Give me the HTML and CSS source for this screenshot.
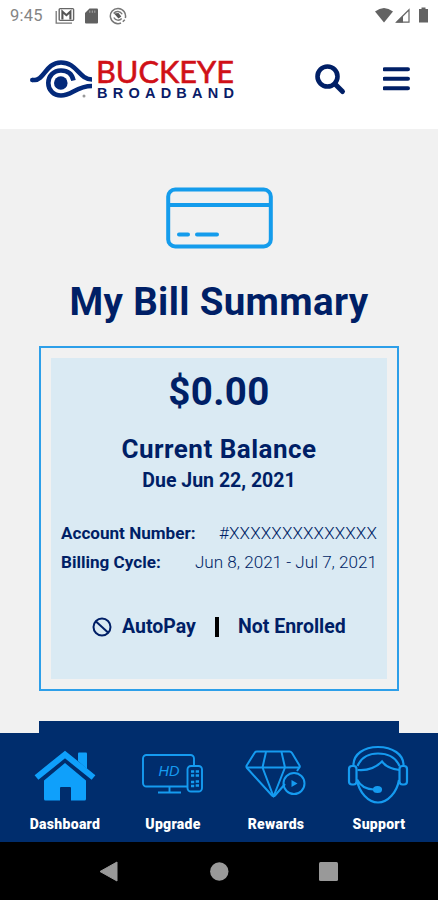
FILE: index.html
```html
<!DOCTYPE html>
<html lang="en">
<head>

    <meta charset="UTF-8">
    <meta name="viewport" content="width=device-width, initial-scale=1.0">

    <title>Buckeye Broadband - My Bill</title>

    <link rel="stylesheet" href="styles.css">

</head>
<body>

    <div class="status">

        <span class="clock">9:45</span>

        <svg class="mail" width="20" height="18" viewBox="0 0 20 18">
            <path d="M1.2 4v12.2H17" fill="none" stroke="#777" stroke-width="1.3"/>
            <rect x="4.2" y="1.6" width="14.4" height="11.8" rx="1" fill="#fff" stroke="#666" stroke-width="1.4"/>
            <path d="M7.4 12.5V4.6l4 3.6 4-3.6v7.9" fill="none" stroke="#555" stroke-width="2.1"/>
        </svg>

        <svg class="sd" width="13" height="16" viewBox="0 0 13 16">
            <path d="M4.5 .5H12a1 1 0 0 1 1 1v13a1 1 0 0 1-1 1H1a1 1 0 0 1-1-1V5z" fill="#606060"/>
            <path d="M4.8 2.5v2.3M7.3 2.5v2.3M9.8 2.5v2.3" stroke="#aaa"/>
        </svg>

        <svg class="sync" width="18" height="18" viewBox="0 0 18 18" fill="none" stroke="#777">
            <path d="M16.3 11A7.6 7.6 0 1 0 12 16" stroke-width="1.5"/>
            <path d="M13.8 14.8l2-2" stroke-width="1.5"/>
            <path d="M4.6 6.5C7 3.4 11.5 4 13.2 7.3M4.8 10.5c1.7 3.2 5.7 3.6 7.9 1" stroke-width="1.4"/>
            <path d="M5 6.5l4.5-.5 2.8 3.5-2.8 2z" fill="#555" stroke="none"/>
        </svg>

        <div class="signal">
            <svg width="54" height="17" viewBox="0 0 54 17">
                <path d="M0 4.5Q9 -2.5 18 4.5L9 15.5z" fill="#636363"/>
                <path d="M21.5 15.2L34 2.8v12.4z" fill="none" stroke="#666" stroke-width="1.2"/>
                <path d="M21 15.5l7-7v7z" fill="#636363"/>
                <path d="M46.5.5h4V2H53v13.5h-9V2h2.5z" fill="#636363"/>
            </svg>
        </div>

    </div>

    <header>

        <svg class="logo" width="206" height="50" viewBox="0 -6 206 50" role="img" aria-label="Buckeye Broadband">
            <g fill="none" stroke="#03297a" stroke-width="4.6">
                <path d="M2.2 25H5C14 25 16 7.5 31 7.5C47 7.5 49 24.5 62 24.5"/>
                <path d="M43.5 25.5C42 18.5 37 15.5 31 15.5C23.500 15.500 18.300 21 18.300 28C18.300 35 23.500 40.500 31 40.500C42 40.500 46 31 62 31"/>
            </g>
            <circle cx="2.3" cy="25" r="2.3" fill="#03297a"/>
            <circle cx="30.8" cy="28" r="6.8" fill="#03297a"/>
            <circle cx="54" cy="41" r="1.5" fill="#999"/>
            <text class="buckeye" x="66" y="28" textLength="138" lengthAdjust="spacingAndGlyphs">BUCKEYE</text>
            <text class="broadband" x="67" y="43" textLength="137">BROADBAND</text>
        </svg>

        <svg class="search" width="32" height="32" viewBox="0 0 32 32" fill="none" stroke="#001f66">
            <circle cx="12.5" cy="12.5" r="10" stroke-width="4.6"/>
            <path d="M20 20l7.5 7.5" stroke-width="5" stroke-linecap="round"/>
        </svg>

        <svg class="burger" width="28" height="24" viewBox="0 0 28 24">
            <path d="M1.5 2.3H25M1.5 11.8H25M1.5 21.3H25" stroke="#001f66" stroke-width="4" stroke-linecap="round"/>
        </svg>

    </header>

    <main>

        <svg class="card" width="108" height="62" viewBox="0 0 108 62" fill="none" stroke="#149cec">
            <rect x="3.2" y="2.5" width="102.6" height="57" rx="7" stroke-width="4"/>
            <path d="M3 18h103" stroke-width="4"/>
            <path d="M14 47.6h9M32 47.6h20" stroke-width="4" stroke-linecap="round"/>
        </svg>

        <h1>My Bill Summary</h1>

        <section class="bill">
            <div class="inner">

                <p class="amount">$0.00</p>
                <h2>Current Balance</h2>
                <p class="due">Due Jun 22, 2021</p>

                <div class="row account"><b>Account Number:</b> <span>#XXXXXXXXXXXXXX</span></div>
                <div class="row cycle"><b>Billing Cycle:</b> <span>Jun 8, 2021 - Jul 7, 2021</span></div>

                <div class="autopay">
                    <svg width="20" height="20" viewBox="0 0 20 20" fill="none" stroke="#001f66" stroke-width="2">
                        <circle cx="10" cy="10" r="8.5"/>
                        <path d="M4 4.5L16 15.5"/>
                    </svg>
                    <span class="name">AutoPay</span>
                    <i></i>
                    <span class="state">Not Enrolled</span>
                </div>

            </div>
        </section>

        <div class="pay"></div>

    </main>

    <nav class="tabs">

        <a>
            <svg width="64" height="64" viewBox="0 0 64 64" fill="#0fa0fb">
                <path d="M45 10.5a1 1 0 0 1 1-1h7a1 1 0 0 1 1 1V26l-9-8z"/>
                <path d="M3.5 34.5L32 11.500l28.500 23" fill="none" stroke="#0fa0fb" stroke-width="6"/>
                <path d="M32 20L53 37.500v18.500a1.500 1.500 0 0 1-1.500 1.500H38V45a1 1 0 0 0-1-1h-9a1 1 0 0 0-1 1V57.500H12.500a1.500 1.500 0 0 1-1.500-1.500V37.500z"/>
            </svg>
            <span class="dashboard">Dashboard</span>
        </a>

        <a>
            <svg width="64" height="64" viewBox="0 0 64 64" fill="none" stroke="#159bf0" stroke-width="1.9">
                <path d="M46 43.500H5.500A3.500 3.500 0 0 1 2 40V15.500a3.500 3.500 0 0 1 3.500-3.500h44A3.500 3.500 0 0 1 53 15.500V22M28.500 43.500V49M17 49.500h23"/>
                <rect x="46.5" y="23" width="14.5" height="25.5" rx="3.5"/>
                <path d="M50 28.500h3.200M54.700 28.500H58M50 32.500h3.200M54.700 32.500H58M50 39h3.200M54.700 38.500H58M50 43h3.200M54.700 42.500H58" stroke-width="2.400"/>
                <text class="hd" x="17.5" y="32.5" textLength="21" lengthAdjust="spacingAndGlyphs">HD</text>
            </svg>
            <span class="upgrade">Upgrade</span>
        </a>

        <a>
            <svg width="64" height="64" viewBox="0 0 64 64" fill="none" stroke="#159bf0" stroke-width="2" stroke-linejoin="round">
                <path d="M41 41L31 52.500Q29.700 54 28 52.500L3 25Q2 24 2.700 22.500L10.500 10Q11.300 8.500 13 8.500h32.500Q47 8.500 48 10L55.500 22.500Q56.300 24 55 25L53 28"/>
                <path d="M2.500 24.500h53M22 9l-3.500 15.500L29.500 53.500 41 24.500 37.500 9"/>
                <circle cx="50" cy="40.500" r="10.500"/>
                <path d="M47.500 37v7l6-3.500z" fill="#159bf0" stroke="none"/>
            </svg>
            <span class="rewards">Rewards</span>
        </a>

        <a>
            <svg width="64" height="64" viewBox="0 0 64 64" fill="none" stroke="#159bf0" stroke-width="2.2">
                <path d="M6.5 23C6 11 17 4 31 4S57 11 56.500 23M10.500 23C14 15 21 10.500 31 10.500S49 15 52.500 23"/>
                <rect x="2" y="23" width="7.5" height="18.5" rx="3"/>
                <rect x="52.500" y="23" width="7.5" height="18.5" rx="3"/>
                <path d="M10.500 27c11 1 18-2 24.500-8.500 3 4 9 7.500 17.500 8.500M10 37c2 12 11 22.500 21 22.500s19-10.500 21-22.500"/>
                <path d="M10 36.500c3 6 9 9.500 16.500 10"/>
                <ellipse cx="30.500" cy="46.500" rx="3.5" ry="2.5" fill="#159bf0"/>
            </svg>
            <span class="support">Support</span>
        </a>

    </nav>

    <div class="android">
        <svg width="438" height="58" viewBox="0 0 438 58" fill="#999">
            <path d="M100 29.5L117 20v19z" stroke="#999" stroke-linejoin="round"/>
            <circle cx="219.3" cy="29.5" r="9.2"/>
            <rect x="319" y="20" width="19" height="19" rx="1.5"/>
        </svg>
    </div>

</body>
</html>
```

FILE: styles.css
```css
* {
    box-sizing: border-box;
}

body {
    margin: 0px;
    height: 900px;
    display: flex;
    flex-direction: column;
    overflow: hidden;
    background: #fff;
    color: #001f66;
    font-family: Roboto, "Liberation Sans", sans-serif;
}

svg {
    display: block;
    flex: none;
}

h1, h2, p {
    margin: 0px;
    white-space: nowrap;
}

div.status {
    height: 31px;
    flex: none;
    display: flex;
    align-items: center;
    padding-left: 10px;
}

.clock {
    width: 45px;
    font-size: 16.5px;
    letter-spacing: 0.2px;
    color: #858585;
}

.sd {
    margin-left: 10px;
}

.sync {
    margin-left: 11px;
}

.signal {
    margin-left: auto;
    padding-right: 9px;
}

header {
    height: 98px;
    flex: none;
    display: flex;
    align-items: flex-start;
    padding: 18px 27px 0px 30px;
}

.logo {
    overflow: visible;
}

.buckeye {
    font-family: Lato, sans-serif;
    font-size: 31px;
    fill: #d01017;
    stroke: #d01017;
    stroke-width: 0.6px;
}

.broadband {
    font-family: "Liberation Sans", sans-serif;
    font-size: 14.5px;
    font-weight: bold;
    fill: #0a1c68;
}

.search {
    margin: 15px 0px 0px 79px;
}

.burger {
    margin: 18px 0px 0px auto;
}

main {
    flex: 1;
    min-height: 0px;
    overflow: hidden;
    display: flex;
    flex-direction: column;
    align-items: center;
    background: #f1f1f1;
    padding-top: 58px;
}

h1 {
    margin-top: 28px;
    font-size: 38.5px;
    line-height: 50px;
    letter-spacing: 0.35px;
}

.bill {
    width: 360px;
    height: 345px;
    flex: none;
    margin-top: 19px;
    padding: 10px;
    border: 2px solid #2d9fe9;
}

.inner {
    height: 100%;
    display: flex;
    flex-direction: column;
    align-items: center;
    padding: 10px 10px 0px;
    background: #daeaf3;
}

.amount {
    font-size: 38.5px;
    font-weight: bold;
    line-height: 48px;
    letter-spacing: 0.4px;
}

h2 {
    margin-top: 16px;
    font-size: 26px;
    line-height: 34px;
    letter-spacing: 0.5px;
}

.due {
    margin-top: 1px;
    font-size: 19.5px;
    font-weight: bold;
    line-height: 28px;
}

.row {
    width: 100%;
    display: flex;
    justify-content: space-between;
    font-size: 17.1px;
    line-height: 29px;
    white-space: nowrap;
}

.row span {
    font-weight: 300;
}

.account {
    margin-top: 24px;
}

.account span {
    letter-spacing: 0.1px;
}

.autopay {
    display: flex;
    align-items: center;
    width: 100%;
    margin-top: 38px;
    padding-left: 31px;
    font-size: 19.5px;
    font-weight: bold;
    line-height: 24px;
    white-space: nowrap;
}

.autopay .name {
    width: 93px;
    margin-left: 10px;
}

.autopay i {
    width: 4px;
    height: 20px;
    margin-right: 19px;
    background: #000;
}

.pay {
    width: 360px;
    height: 60px;
    flex: none;
    margin-top: 30px;
    background: #002d6d;
}

.tabs {
    height: 109px;
    flex: none;
    display: flex;
    gap: 39px;
    padding: 10px 0px 0px 33px;
    background: #002d6d;
}

.tabs a {
    width: 64px;
    display: flex;
    flex-direction: column;
    align-items: center;
    color: #fff;
    font-size: 14px;
    font-weight: 900;
    line-height: 34px;
    letter-spacing: 0.3px;
}

.tabs a:first-child {
    margin-right: 5px;
}

.hd {
    font-family: "Liberation Sans", sans-serif;
    font-size: 14px;
    font-style: italic;
    font-weight: normal;
    letter-spacing: 0px;
    fill: #159bf0;
    stroke: none;
}

.android {
    height: 58px;
    flex: none;
    background: #000;
}
```
